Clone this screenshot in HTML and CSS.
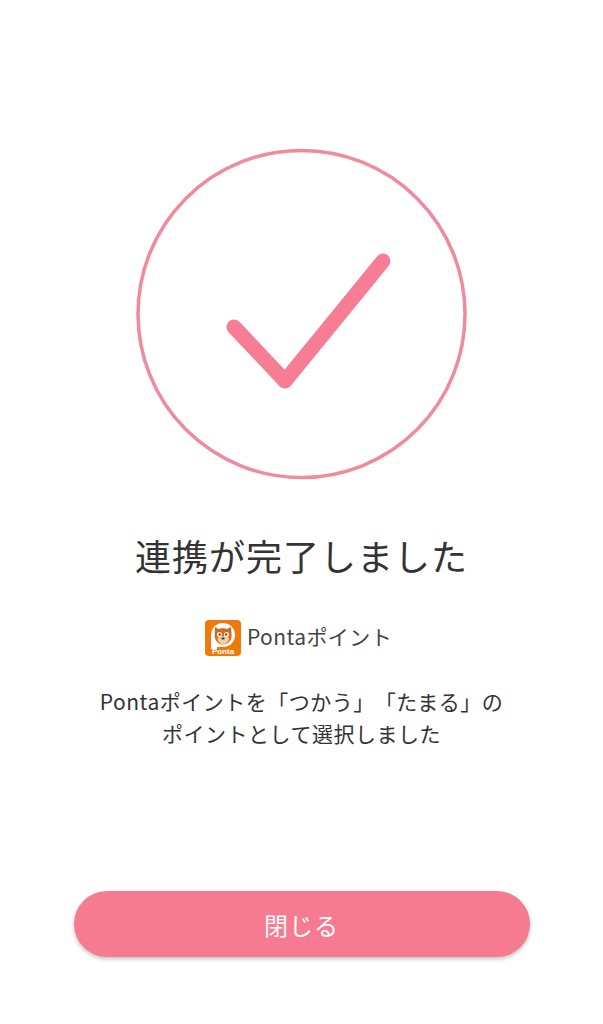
FILE: index.html
```html
<!DOCTYPE html>
<html lang="ja">
<head>
    <meta charset="UTF-8">
    <meta name="viewport" content="width=device-width, initial-scale=1.0">
    <title>連携完了</title>
    <link rel="stylesheet" href="styles.css">
</head>
<body>
    <main class="page">
        <svg class="check" width="332" height="332" viewBox="0 0 332 332" aria-hidden="true">
            <circle class="check-ring" cx="165.500" cy="166" r="163.500"/>
            <path class="check-mark" d="M98 179 L149 233 L247 113"/>
        </svg>

        <h1 class="title">連携が完了しました</h1>

        <div class="service">
            <svg class="service-logo" width="36" height="36" viewBox="0 0 36 36" aria-hidden="true">
                <rect width="36" height="36" rx="4" fill="#ee7a0c"/>
                <path d="M6 16 C6 8 11 3 18 3 C25 3 30 8 30 15 C30 22 25 27 18 27 L12 27 L12 29 L6 29 Z" fill="#fff"/>
                <path d="M10 7 L13.500 9 C15.500 8 20 8 22 9 L26 7 L26.500 14 C27.500 20 23 24.500 18 24.500 C13 24.500 9 20 9.800 14 Z" fill="#cf6a1e"/>
                <path d="M12.500 18 C14 15.500 22 15.500 24 18 C24 21.500 21.500 24 18 24 C15 24 12.500 21.500 12.500 18 Z" fill="#f6cfa0"/>
                <circle cx="14.500" cy="14.500" r="2.600" fill="#f8e6cf"/>
                <circle cx="21.500" cy="14.500" r="2.600" fill="#f8e6cf"/>
                <circle cx="14.800" cy="14.500" r="1.100" fill="#4a2a12"/>
                <circle cx="21.200" cy="14.500" r="1.100" fill="#4a2a12"/>
                <ellipse cx="18" cy="18.500" rx="1.700" ry="1.100" fill="#4a2a12"/>
                <text class="service-logo-text" x="18" y="34" text-anchor="middle">Ponta</text>
            </svg>
            <span class="service-name">Pontaポイント</span>
        </div>

        <p class="message">Pontaポイントを「つかう」「たまる」の<br>ポイントとして選択しました</p>

        <button class="close" type="button">閉じる</button>
    </main>
</body>
</html>
```

FILE: styles.css
```css
* {
    box-sizing: border-box;
}
body {
    margin: 0;
    background-color: #fff;
    color: #333;
    font-family: "Noto Sans CJK JP", "Noto Sans", sans-serif;
    text-spacing-trim: space-all;
}
.page {
    display: flex;
    flex-direction: column;
    align-items: center;
    height: 1024px;
    padding-top: 148px;
}
.check {
    display: block;
    margin-bottom: 50px;
}
.check-ring {
    fill: none;
    stroke: #f08a9d;
    stroke-width: 3.500;
}
.check-mark {
    fill: none;
    stroke: #f67d93;
    stroke-width: 15;
    stroke-linecap: round;
    stroke-linejoin: round;
}
.title {
    margin: 0;
    font-size: 36px;
    font-weight: 400;
    line-height: 50px;
    letter-spacing: 1px;
}
.service {
    display: flex;
    align-items: center;
    gap: 6px;
    margin-top: 40px;
    padding-right: 6px;
}
.service-logo {
    display: block;
}
.service-logo-text {
    fill: #fff;
    font-family: "Liberation Sans", sans-serif;
    font-size: 8px;
    font-weight: 700;
}
.service-name {
    padding-bottom: 4px;
    font-size: 21px;
    letter-spacing: 0.400px;
    color: #444;
}
.message {
    margin: 29px 0 0;
    font-size: 21px;
    line-height: 32px;
    letter-spacing: 0.500px;
    text-align: center;
}
.close {
    width: 456px;
    height: 66px;
    margin-top: 142px;
    border: none;
    border-radius: 33px;
    background-color: #f67b90;
    box-shadow: 0 2px 4px rgba(0, 0, 0, 0.25);
    color: #fff;
    font-family: inherit;
    font-size: 24px;
    letter-spacing: 1px;
}
```
